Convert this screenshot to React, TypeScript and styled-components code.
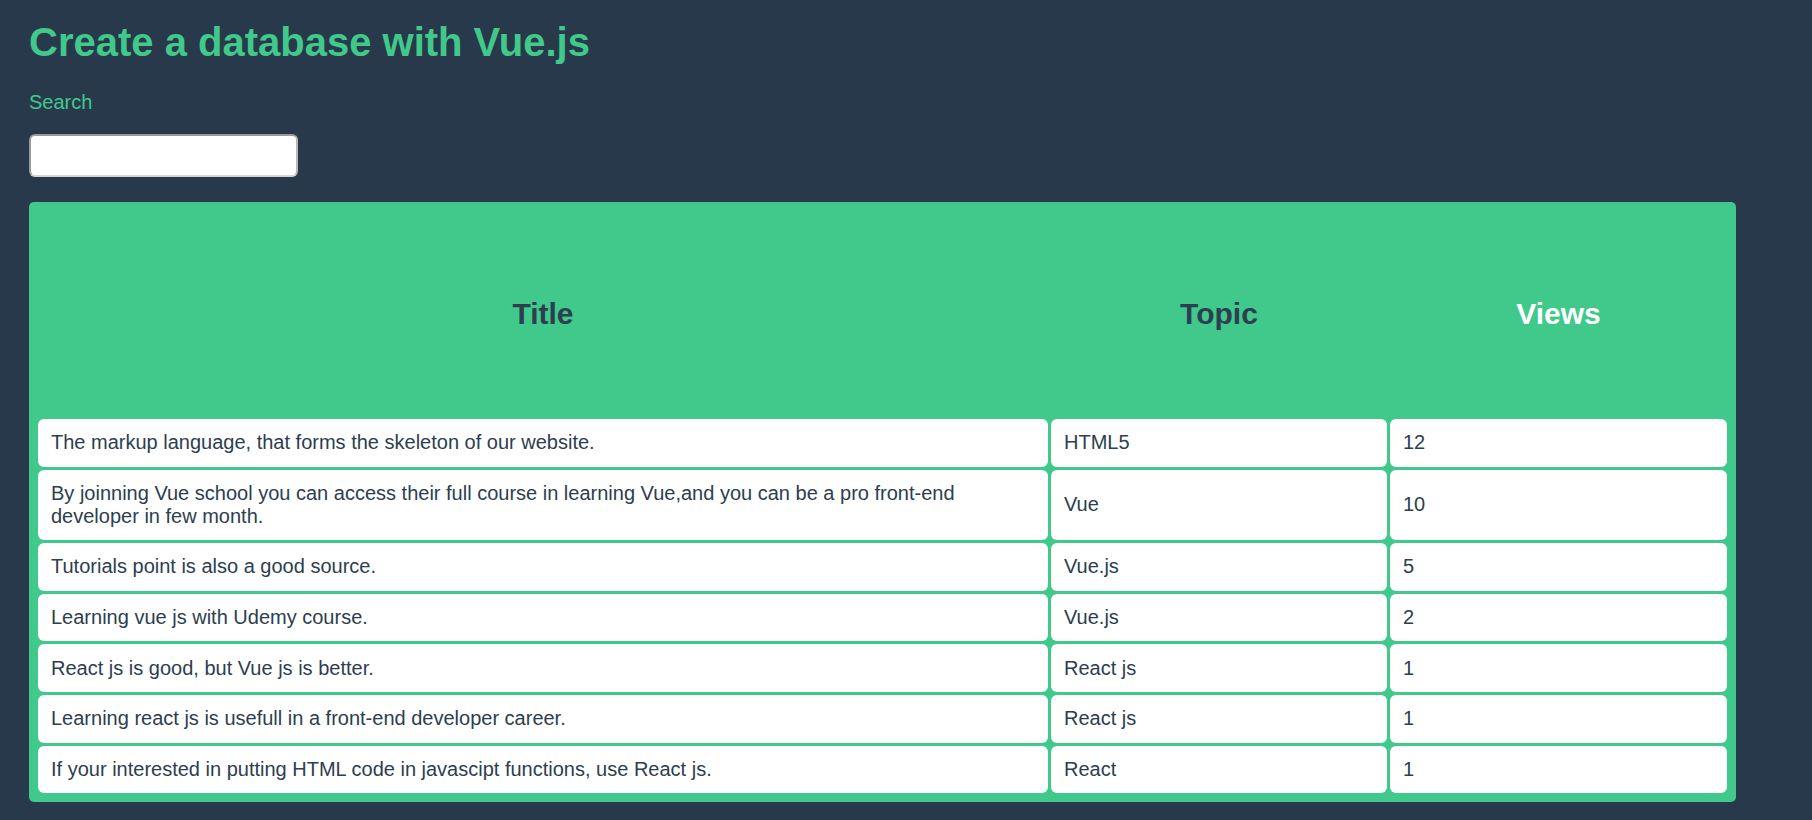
import React, { useState } from "react";
import styled, { createGlobalStyle } from "styled-components";

const GlobalStyle = createGlobalStyle`
  html, body {
    margin: 0;
    padding: 0;
    background: #29394c;
  }
  body {
    font-family: "Liberation Sans", Arial, sans-serif;
  }
`;

const Page = styled.div`
  min-height: 820px;
  box-sizing: border-box;
  padding: 19px 29px 0 29px;
  background: #29394c;
`;

const Heading = styled.h1`
  margin: 0 0 26px 0;
  font-size: 40px;
  line-height: 46px;
  font-weight: bold;
  color: #40c98a;
`;

const Label = styled.label`
  display: block;
  font-size: 20px;
  line-height: 23px;
  color: #40c98a;
  margin-bottom: 20px;
`;

const SearchInput = styled.input`
  display: block;
  box-sizing: border-box;
  width: 269px;
  height: 43px;
  margin: 0 0 25px 0;
  padding: 4px 10px;
  border: 2px solid #9a9a9a;
  border-bottom-color: #d6d6d6;
  border-right-color: #b8b8b8;
  border-radius: 6px;
  background: #fff;
  font-size: 18px;
  font-family: "Liberation Sans", Arial, sans-serif;
  color: #2c3e50;
  outline: none;
`;

const Table = styled.table`
  box-sizing: border-box;
  width: 1707px;
  table-layout: fixed;
  border-collapse: separate;
  border-spacing: 3px;
  padding: 6px;
  background: #40c98a;
  border-radius: 5px;
`;

const HeadCell = styled.th<{ $active?: boolean }>`
  height: 205px;
  padding: 0;
  text-align: center;
  vertical-align: middle;
  font-size: 30px;
  font-weight: bold;
  color: ${(p) => (p.$active ? "#ffffff" : "#2c3e50")};
  cursor: pointer;
`;

const Cell = styled.td`
  background: #ffffff;
  border-radius: 6px;
  padding: 12.3px 13px;
  font-size: 20px;
  line-height: 23px;
  color: #2c3e50;
  vertical-align: middle;
  text-align: left;
`;

type Row = { title: string; topic: string; views: number };

const rows: Row[] = [
  { title: "The markup language, that forms the skeleton of our website.", topic: "HTML5", views: 12 },
  {
    title:
      "By joinning Vue school you can access their full course in learning Vue,and you can be a pro front-end developer in few month.",
    topic: "Vue",
    views: 10,
  },
  { title: "Tutorials point is also a good source.", topic: "Vue.js", views: 5 },
  { title: "Learning vue js with Udemy course.", topic: "Vue.js", views: 2 },
  { title: "React js is good, but Vue js is better.", topic: "React js", views: 1 },
  { title: "Learning react js is usefull in a front-end developer career.", topic: "React js", views: 1 },
  { title: "If your interested in putting HTML code in javascipt functions, use React js.", topic: "React", views: 1 },
];

export default function App() {
  const [query, setQuery] = useState("");
  const filtered = rows.filter((r) =>
    (r.title + " " + r.topic).toLowerCase().includes(query.toLowerCase())
  );
  return (
    <Page>
      <GlobalStyle />
      <Heading>Create a database with Vue.js</Heading>
      <Label htmlFor="search">Search</Label>
      <SearchInput id="search" value={query} onChange={(e) => setQuery(e.target.value)} />
      <Table>
        <colgroup>
          <col style={{ width: 1010 }} />
          <col style={{ width: 336 }} />
          <col style={{ width: 337 }} />
        </colgroup>
        <thead>
          <tr>
            <HeadCell>Title</HeadCell>
            <HeadCell>Topic</HeadCell>
            <HeadCell $active>Views</HeadCell>
          </tr>
        </thead>
        <tbody>
          {filtered.map((r, i) => (
            <tr key={i}>
              <Cell>{r.title}</Cell>
              <Cell>{r.topic}</Cell>
              <Cell>{r.views}</Cell>
            </tr>
          ))}
        </tbody>
      </Table>
    </Page>
  );
}
